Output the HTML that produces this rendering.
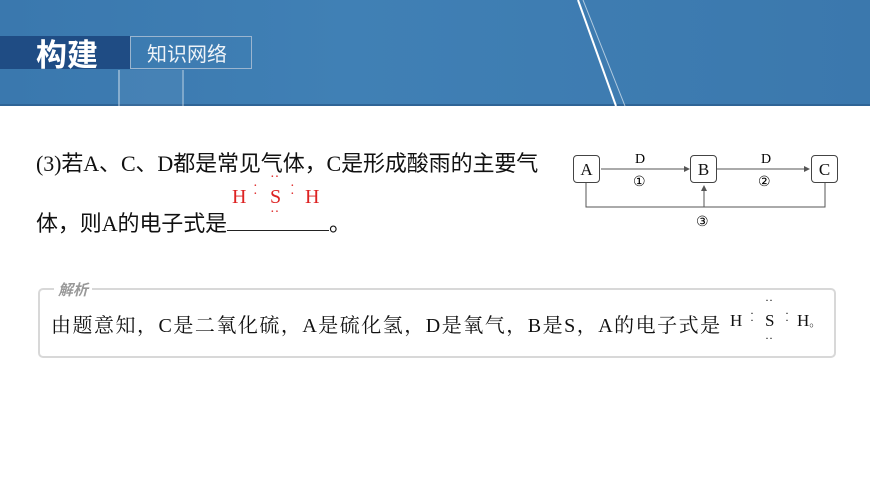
<!DOCTYPE html>
<html><head><meta charset="utf-8"><style>
*{margin:0;padding:0;box-sizing:border-box}
body{width:870px;height:489px;background:#fff;position:relative;overflow:hidden;font-family:"Liberation Serif","Noto Serif CJK SC",serif;color:#111}
.hdr{position:absolute;left:0;top:0;width:870px;height:106px;background:linear-gradient(90deg,#3a78ae,#4080b5 40%,#3b78ad);border-bottom:2px solid #2f6496}
.a{position:absolute}
.t1{left:0;top:36px;width:130px;height:33px;background:#1f4c84;color:#fff;font:bold 31px "Noto Sans CJK SC",sans-serif;line-height:33px;padding-left:36px}
.t2{left:130px;top:36px;width:122px;height:33px;border:1px solid #9bb5cf;color:#eef3f8;font:20px "Noto Sans CJK SC",sans-serif;line-height:31px;padding-left:16px}
.glass{left:118px;top:70px;width:66px;height:36px;border-left:2px solid rgba(255,255,255,.35);border-right:2px solid rgba(255,255,255,.3);background:rgba(255,255,255,.05)}
.q{font-family:"Liberation Serif","Noto Sans CJK SC",serif;font-size:22px;letter-spacing:-0.1px}
.box{position:absolute;border:1px solid #444;border-radius:4px;background:#fff;width:27px;height:28px;text-align:center;line-height:27px;font-size:17px}
.red{color:#d22;font-size:20px}
.an{font-family:"Liberation Serif","Noto Serif CJK SC",serif;font-size:20px;letter-spacing:1.5px}
</style></head><body>
<div class="hdr"></div>
<svg class="a" style="left:0;top:0" width="870" height="106"><line x1="578" y1="0" x2="616" y2="106" stroke="#fff" stroke-width="2"/><line x1="583" y1="0" x2="625" y2="106" stroke="rgba(255,255,255,.6)" stroke-width="1"/></svg>
<div class="a glass"></div>
<div class="a t1">构建</div>
<div class="a t2">知识网络</div>

<div class="a q" style="left:36px;top:146px;white-space:nowrap">(3)若A、C、D都是常见气体，C是形成酸雨的主要气</div>
<div class="a q" style="left:36px;top:206px;white-space:nowrap">体，则A的电子式是<span style="display:inline-block;width:102px;border-bottom:1px solid #222;height:22px"></span>。</div>
<div class="a red" style="left:232px;top:186px">H</div>
<div class="a red" style="left:253px;top:183px;font-size:14px;line-height:8px">·<br>·</div>
<div class="a red" style="left:270px;top:186px">S</div>
<div class="a red" style="left:270px;top:170px;font-size:14px">··</div>
<div class="a red" style="left:270px;top:205px;font-size:14px">··</div>
<div class="a red" style="left:290px;top:183px;font-size:14px;line-height:8px">·<br>·</div>
<div class="a red" style="left:305px;top:186px">H</div>

<svg class="a" style="left:560px;top:140px" width="290" height="95" font-family="Liberation Serif" font-size="14">
<defs><marker id="m" markerWidth="6" markerHeight="6" refX="5" refY="3" orient="auto"><path d="M0,0 L6,3 L0,6z" fill="#555"/></marker></defs>
<line x1="41" y1="29" x2="129" y2="29" stroke="#555" marker-end="url(#m)"/>
<line x1="157" y1="29" x2="249" y2="29" stroke="#555" marker-end="url(#m)"/>
<polyline points="26,43 26,67 265,67 265,43" fill="none" stroke="#555"/>
<line x1="144" y1="67" x2="144" y2="46" stroke="#555" marker-end="url(#m)"/>
<text x="75" y="23">D</text><text x="201" y="23">D</text>
<text x="73" y="46">①</text><text x="198" y="46">②</text><text x="136" y="86">③</text>
</svg>
<div class="box" style="left:573px;top:155px">A</div>
<div class="box" style="left:690px;top:155px">B</div>
<div class="box" style="left:811px;top:155px">C</div>

<div class="a" style="left:38px;top:288px;width:798px;height:70px;border:2px solid #d8d8d8;border-radius:5px"></div>
<div class="a" style="left:54px;top:279px;background:#fff;padding:0 4px;color:#999;font:italic bold 15px 'Noto Sans CJK SC',sans-serif">解析</div>
<div class="a an" style="left:51px;top:309px;white-space:nowrap">由题意知，C是二氧化硫，A是硫化氢，D是氧气，B是S，A的电子式是</div>
<div class="a" style="left:730px;top:311px;font-size:17px">H</div>
<div class="a" style="left:750px;top:310px;font-size:12px;line-height:7px">·<br>·</div>
<div class="a" style="left:765px;top:311px;font-size:17px">S</div>
<div class="a" style="left:765px;top:293px;font-size:12px">··</div>
<div class="a" style="left:765px;top:331px;font-size:12px">··</div>
<div class="a" style="left:785px;top:310px;font-size:12px;line-height:7px">·<br>·</div>
<div class="a" style="left:797px;top:311px;font-size:17px">H<span style="font-size:12px">。</span></div>
</body></html>
